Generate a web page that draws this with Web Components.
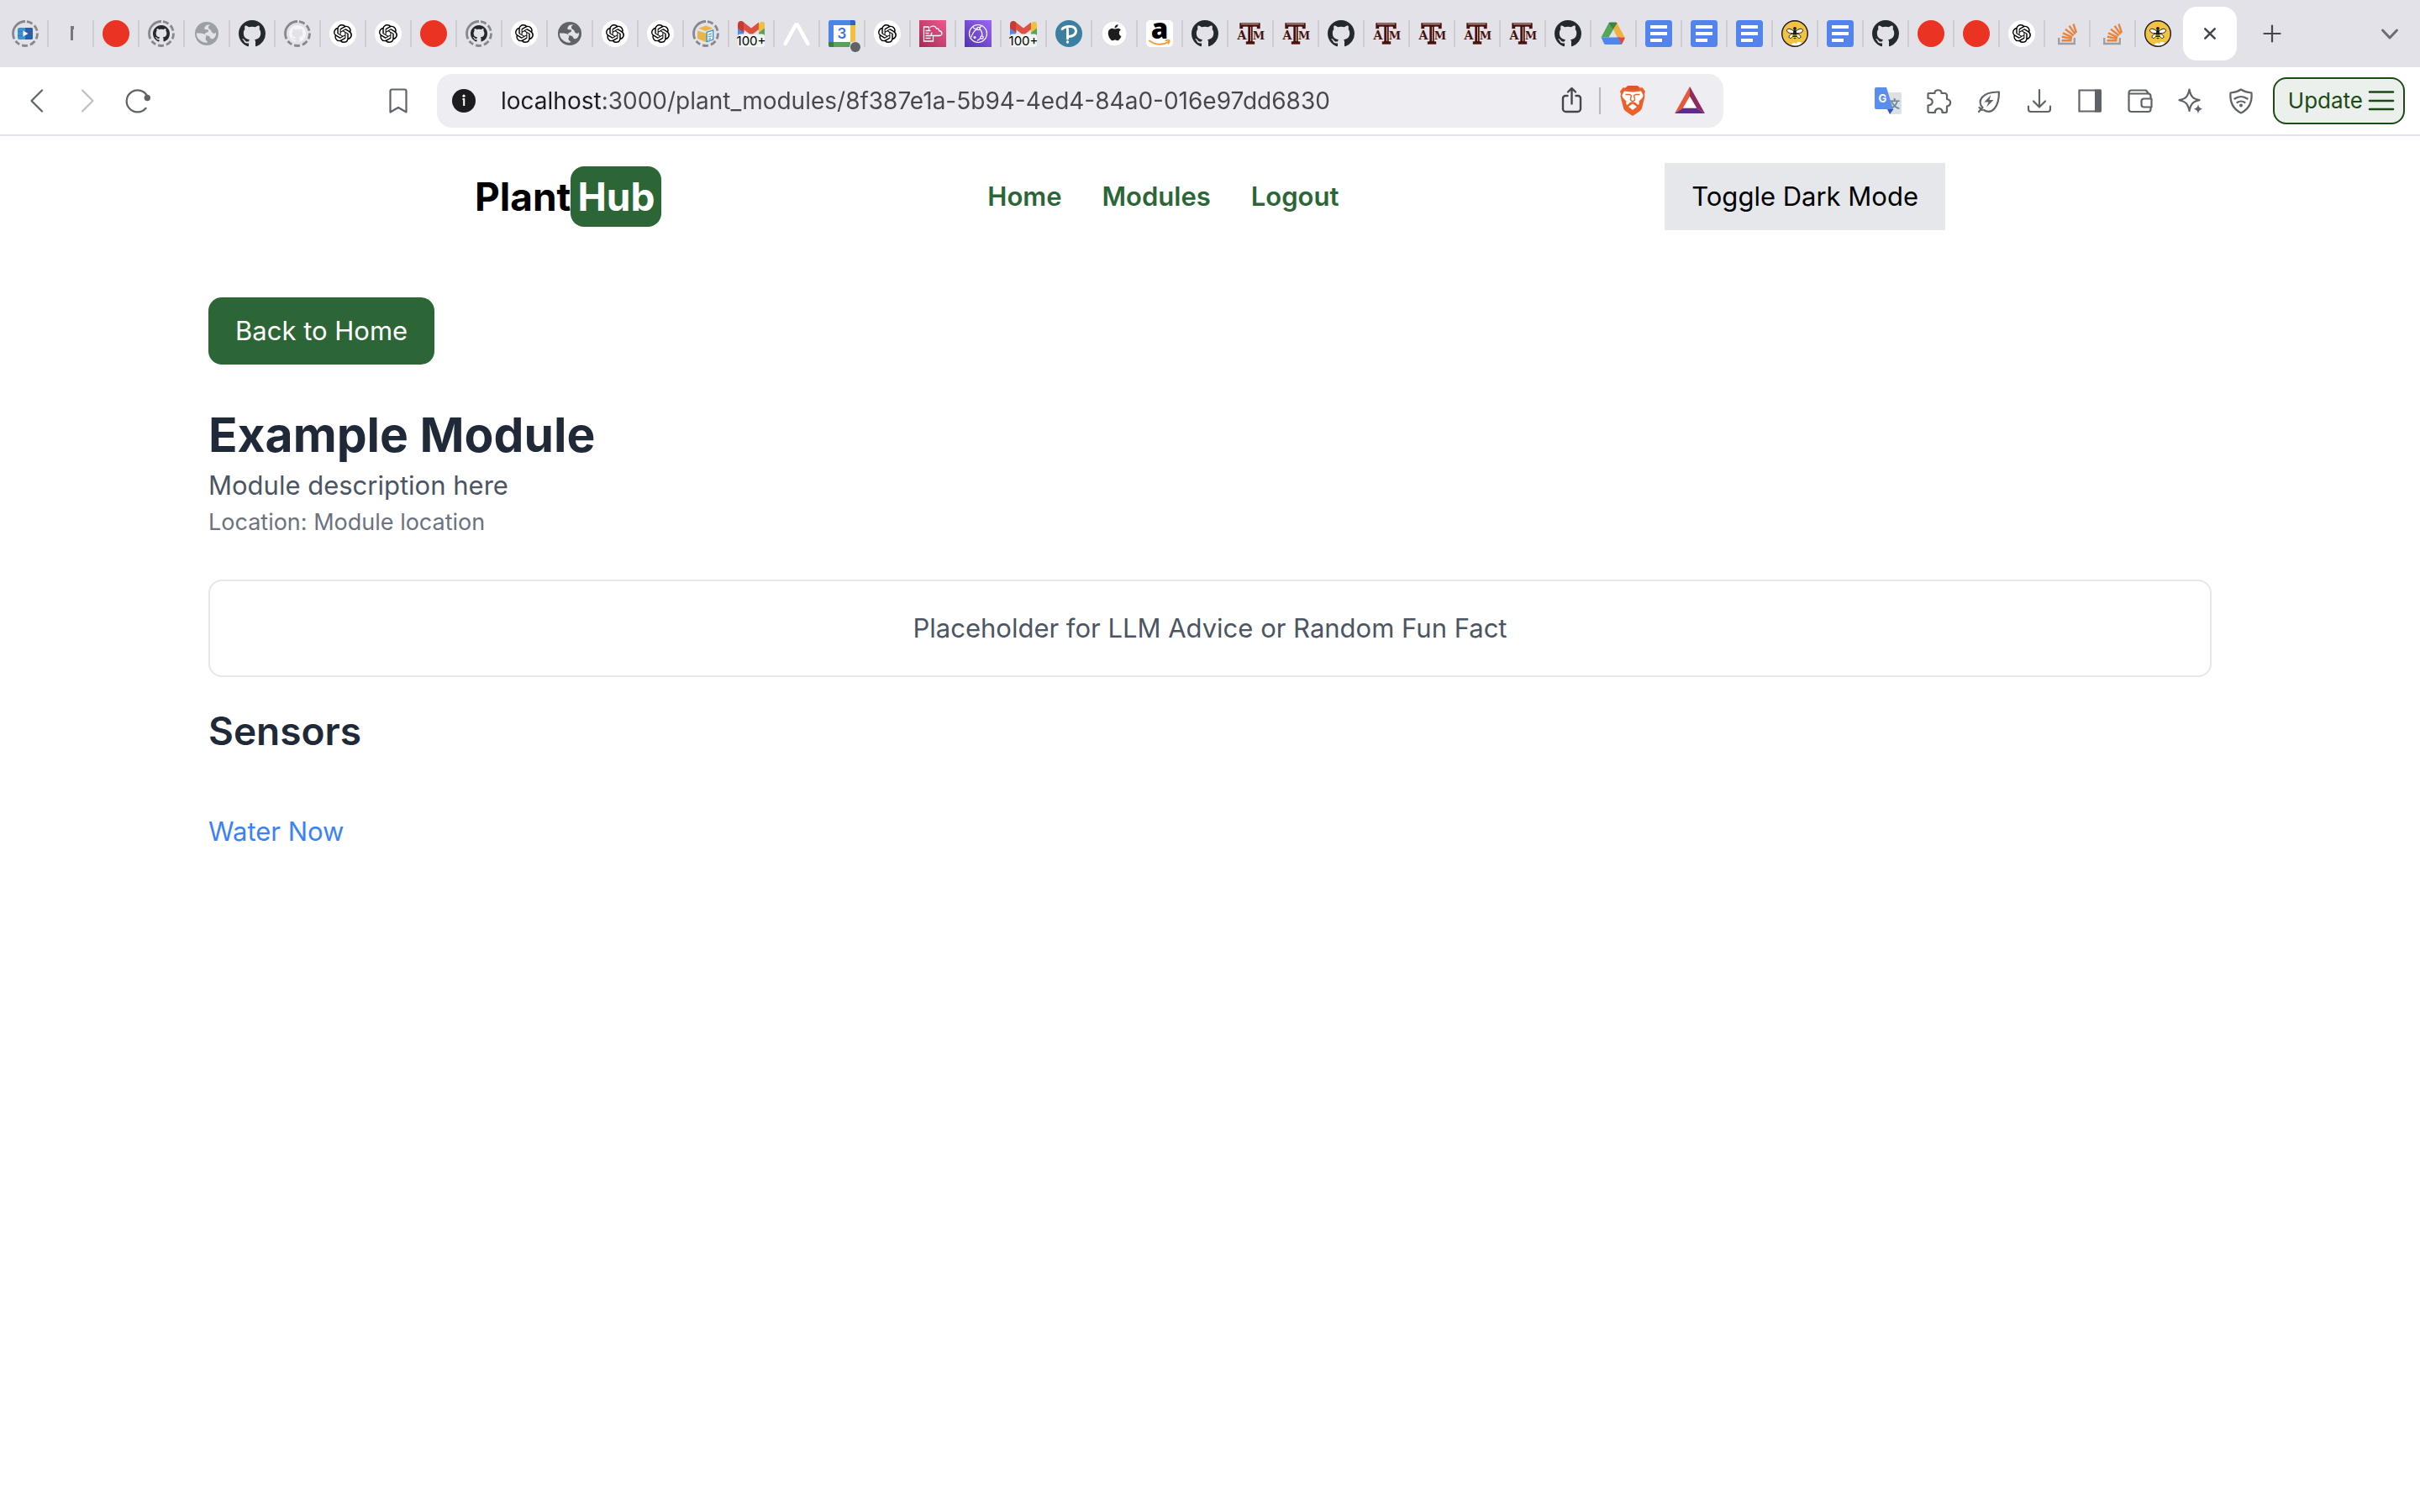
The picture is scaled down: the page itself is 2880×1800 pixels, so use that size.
<!DOCTYPE html>
<html lang="en">
<head>
<meta charset="utf-8">
<title>PlantHub</title>
<style>
  html, body { margin: 0; min-height: 100%; background: #fff; }
  body { font-family: Inter, "Liberation Sans", sans-serif; color: #000; }
</style>
</head>
<body>
<browser-window>
  <tab-strip slot="tabs"></tab-strip>
  <tool-bar slot="toolbar" url="localhost:3000/plant_modules/8f387e1a-5b94-4ed4-84a0-016e97dd6830"></tool-bar>
  <site-header></site-header>
  <module-page name="Example Module" description="Module description here" location="Module location">
    <info-card>Placeholder for LLM Advice or Random Fun Fact</info-card>
  </module-page>
</browser-window>

<script>
const OCTOCAT = 'M8 0C3.58 0 0 3.58 0 8c0 3.54 2.29 6.53 5.47 7.59.4.07.55-.17.55-.38 0-.19-.01-.82-.01-1.49-2.01.37-2.53-.49-2.69-.94-.09-.23-.48-.94-.82-1.13-.28-.15-.68-.52-.01-.53.63-.01 1.08.58 1.23.82.72 1.21 1.87.87 2.33.66.07-.52.28-.87.51-1.07-1.78-.2-3.64-.89-3.64-3.95 0-.87.31-1.59.82-2.15-.08-.2-.36-1.02.08-2.12 0 0 .67-.21 2.2.82.64-.18 1.32-.27 2-.27.68 0 1.36.09 2 .27 1.53-1.04 2.2-.82 2.2-.82.44 1.1.16 1.92.08 2.12.51.56.82 1.27.82 2.15 0 3.07-1.87 3.75-3.65 3.95.29.25.54.73.54 1.48 0 1.07-.01 1.93-.01 2.2 0 .21.15.46.55.38A8.013 8.013 0 0016 8c0-4.42-3.58-8-8-8z';
const KNOT = 'M22.2819 9.8211a5.9847 5.9847 0 0 0-.5157-4.9108 6.0462 6.0462 0 0 0-6.5098-2.9A6.0651 6.0651 0 0 0 4.9807 4.1818a5.9847 5.9847 0 0 0-3.9977 2.9 6.0462 6.0462 0 0 0 .7427 7.0966 5.98 5.98 0 0 0 .511 4.9107 6.051 6.051 0 0 0 6.5146 2.9001A5.9847 5.9847 0 0 0 13.2599 24a6.0557 6.0557 0 0 0 5.7718-4.2058 5.9894 5.9894 0 0 0 3.9977-2.9001 6.0557 6.0557 0 0 0-.7475-7.0729zm-9.022 12.6081a4.4755 4.4755 0 0 1-2.8764-1.0408l.1419-.0804 4.7783-2.7582a.7948.7948 0 0 0 .3927-.6813v-6.7369l2.02 1.1686a.071.071 0 0 1 .038.052v5.5826a4.504 4.504 0 0 1-4.4945 4.4944zm-9.6607-4.1254a4.4708 4.4708 0 0 1-.5346-3.0137l.142.0852 4.783 2.7582a.7712.7712 0 0 0 .7806 0l5.8428-3.3685v2.3324a.0804.0804 0 0 1-.0332.0615L9.74 19.9502a4.4992 4.4992 0 0 1-6.1408-1.6464zM2.3408 7.8956a4.485 4.485 0 0 1 2.3655-1.9728V11.6a.7664.7664 0 0 0 .3879.6765l5.8144 3.3543-2.0201 1.1685a.0757.0757 0 0 1-.071 0l-4.8303-2.7865A4.504 4.504 0 0 1 2.3408 7.872zm16.5963 3.8558L13.1038 8.364 15.1192 7.2a.0757.0757 0 0 1 .071 0l4.8303 2.7913a4.4944 4.4944 0 0 1-.6765 8.1042v-5.6772a.79.79 0 0 0-.407-.667zm2.0107-3.0231l-.142-.0852-4.7735-2.7818a.7759.7759 0 0 0-.7854 0L9.409 9.2297V6.8974a.0662.0662 0 0 1 .0284-.0615l4.8303-2.7866a4.4992 4.4992 0 0 1 6.6802 4.66zM8.3065 12.863l-2.02-1.1638a.0804.0804 0 0 1-.038-.0567V6.0742a4.4992 4.4992 0 0 1 7.3757-3.4537l-.142.0805L8.704 5.459a.7948.7948 0 0 0-.3927.6813zm1.0976-2.3654l2.602-1.4998 2.6069 1.4998v2.9994l-2.5974 1.4997-2.6067-1.4997Z';
const APPLE = 'M12.152 6.896c-.948 0-2.415-1.078-3.96-1.04-2.04.027-3.91 1.183-4.961 3.014-2.117 3.675-.546 9.103 1.519 12.09 1.013 1.454 2.208 3.09 3.792 3.039 1.52-.065 2.09-.987 3.935-.987 1.831 0 2.35.987 3.96.948 1.637-.026 2.676-1.48 3.676-2.948 1.156-1.688 1.636-3.325 1.662-3.415-.039-.013-3.182-1.221-3.22-4.857-.026-3.04 2.48-4.494 2.597-4.559-1.429-2.09-3.623-2.324-4.39-2.376-2-.156-3.675 1.09-4.61 1.09zM15.53 3.83c.843-1.012 1.4-2.427 1.245-3.83-1.207.052-2.662.805-3.532 1.818-.78.896-1.454 2.338-1.273 3.714 1.338.104 2.715-.688 3.559-1.701';

/* Sleeping tabs: solid arc on the left, dashes on the right. */
const RING = '<circle cx="16" cy="16" r="14.5" fill="none" stroke="#87888d" stroke-width="2.8" pathLength="360" stroke-dasharray="0 8 28 12 28 12 28 12 28 12 28 12 24 12 116 0" transform="rotate(-90 16 16)"/>';
const globe = c => `<circle cx="16" cy="16" r="14" fill="${c}"/><path fill="#e3e2e8" d="M15.500 6c-2 2-3 4-1.500 5 1 .8 3-.5 3.800.8.700 1.400-.300 2.600-2 3-1.500.4-2.300 1.700-1.500 3 .8 1 3 .3 4.500 1.200 1.800 1 1.200 3.500 4 3.300 2-.2 3-2 4.100-4.300C28 12 24 6.500 20 5zM4 15.500c4-.3 9 0 10.500 1.800 1.800 2.400-.5 4 .2 6 .4 1.300 2.300 1.300 2.300 3.200-5 1-10-2.500-12-6-.8-1.600-1-3.400-1-5z"/><path fill="${c}" d="M20 5c4.500 1.500 7 5 7.500 9-1.500 2-2.500 2-4 1.500-2-.7-1.500-3-3-4-1.200-.9-2.500-1-2.500-3 0-1.500 1-2 2-3.500z"/>`;

const FAVICONS = {
  slides: RING + '<rect x="7" y="9" width="18" height="14" rx="2" fill="#3a93cf"/><path fill="#2a5ea6" d="M16 9h7a2 2 0 012 2v10a2 2 0 01-2 2h-7z"/><path stroke="#2f7cb8" d="M7 13.500h9M7 18.500h9"/><path fill="#fff" d="M13.500 12.500v7L19.500 16z"/>',
  bar: '<path fill="#77787d" d="M16 7h4v4h-1v13h-3z"/>',
  red: '<circle cx="16" cy="16" r="16" fill="#ea3323"/>',
  github: `<path fill="#24292e" transform="scale(2)" d="${OCTOCAT}"/>`,
  githubRing: RING + `<path fill="#24292e" transform="translate(6 6) scale(1.25)" d="${OCTOCAT}"/>`,
  githubPale: RING + `<path fill="#f6f6f8" transform="translate(6 6) scale(1.25)" d="${OCTOCAT}"/>`,
  globe: globe('#9aa0a3'),
  globeDark: globe('#5f6367'),
  ai: `<circle cx="16" cy="16" r="16" fill="#fff"/><path transform="translate(5 5) scale(.917)" d="${KNOT}"/>`,
  box: RING + '<path fill="#e9b54a" d="M6 12.500l10 3v10.500l-10-4z"/><path fill="#e2a93c" d="M16 15.500l9-3v9l-9 4.500z"/><path fill="#e9b54a" d="M7.500 9.800L16 6.500l8.500 3.300L16 13z"/><path fill="#f3f8fb" stroke="#3f93cd" stroke-width="1.300" d="M17.200 14.300l7.500-2.300v11l-7.500 2.700z"/><path stroke="#3f93cd" stroke-width="1.200" d="M19 17.200l4-1.200M19 20l4-1.200M19 22.800l3-.9"/>',
  gmail: '<clipPath id="g"><rect width="32" height="32" rx="3"/></clipPath><g clip-path="url(#g)"><path fill="#4f87ec" d="M0 8l7 5v13H0z"/><path fill="#55a45a" d="M32 8l-7 5v13h7z"/><path fill="#efbf3f" d="M25 4.500C27 1 32 .5 32 5v4.500L25 15z"/><path fill="#c63c31" d="M0 5C0 .5 5 0 7.500 3v12L0 9.500z"/><path fill="#dc5142" d="M7 2.500l9 7 9-7V11l-9 7-9-7z"/><rect y="16.500" width="32" height="15.500" rx="3" fill="#f1f6f3"/></g><text x="16" y="30" text-anchor="middle" font-family="Inter" font-size="15" fill="#000">100+</text>',
  caret: '<path fill="none" stroke="#fff" stroke-width="4.500" stroke-linecap="round" stroke-linejoin="round" d="M2.500 28L15 5.500h2L29.500 28"/>',
  calendar: '<rect width="32" height="32" rx="2.500" fill="#4f83ea"/><path fill="#2f62c8" d="M26 0h3.500A2.500 2.500 0 0132 2.500V6h-6z"/><path fill="#f1bf42" d="M26 6h6v20h-6z"/><path fill="#56a45b" d="M6 26h20v6H6z"/><path fill="#397e42" d="M0 26h6v6H2.500A2.500 2.500 0 010 29.500z"/><path fill="#fff" d="M6 6h20v20H6z"/><path fill="#e3e2e8" d="M26 26h6v6h-6z"/><text x="16" y="22" text-anchor="middle" font-family="Inter" font-weight="600" font-size="17" fill="#3b72df">3</text><circle cx="32" cy="32" r="7" fill="#e3e2e8"/><circle cx="32" cy="32" r="6" fill="#5f6368"/>',
  pink: '<linearGradient id="p" x1="0" y1="1" x2="1" y2="0"><stop stop-color="#a62a55"/><stop offset="1" stop-color="#ee5a8d"/></linearGradient><path fill="url(#p)" d="M0 0h32v32H0z"/><g fill="none" stroke="#fff" stroke-width="1.300"><path d="M11.500 8H5.500v17h11v-7M11.500 8v5M7.500 12.500h6M7.500 15.500h4M7.500 18.500h7M7.500 21.500h6M13 8.500c2-2.500 6.500-1.500 7.500 1.500 2-.5 3 .8 3 2.500 4.500.5 4.500 6 .5 6h-7.500c-3 0-3-3-1-3.500"/></g>',
  purple: '<linearGradient id="v" x1="0" y1="1" x2="1" y2="0"><stop stop-color="#5132ae"/><stop offset="1" stop-color="#9c68f6"/></linearGradient><path fill="url(#v)" d="M0 0h32v32H0z"/><g fill="none" stroke="#fff" stroke-width="1.200"><circle cx="16" cy="16" r="10.500"/><circle cx="16.500" cy="10" r="1.700"/><circle cx="20.500" cy="20.500" r="1.700"/><circle cx="12" cy="20.500" r="1"/><path d="M15 10.500c-3.500 2-6 5.500-7 10M18 10.500c2 2 3 5 2.800 8.200M19 21.500l-4 3M10 8.500c1 2 3 2 5 1.500M20 7l-2 2"/></g>',
  pearson: '<circle cx="16" cy="16" r="16" fill="#3c7fa1"/><path fill="none" stroke="#fff" stroke-width="3" stroke-linecap="round" d="M8 10.500C12 6.500 24.500 5.500 24.500 13c0 4-4 6.500-8.500 6.500M14.500 10.500v11.500"/><circle cx="14.500" cy="26" r="1.700" fill="#fff"/>',
  apple: `<circle cx="16" cy="16" r="15" fill="#fff" stroke="#d0d0d4" stroke-width=".6"/><path fill="#1d1d1f" transform="translate(7 5) scale(.8)" d="${APPLE}"/>`,
  amazon: '<rect width="32" height="32" rx="5" fill="#fff"/><text x="16" y="22" text-anchor="middle" font-family="Open Sans" font-weight="800" font-size="33" fill="#000">a</text><path fill="none" stroke="#f19e38" stroke-width="2" stroke-linecap="round" d="M4 24.500c7 5.500 16 5.500 22 1.500M23.500 24.200c2-.7 3.500-.7 4 0 .4.800-.2 2.300-1 3.500"/>',
  atm: '<g fill="#4a120d" font-family="DejaVu Serif" font-weight="700" text-anchor="middle"><text x="6" y="22.500" font-size="14">A</text><text x="26" y="22.500" font-size="13">M</text></g><path fill="#4a120d" stroke="#efe9ea" stroke-width=".6" d="M3 3h25v7.500h-4.500V8H19v17h2.500v4h-11v-4H13V8H7.500v2.500H3z"/><path stroke="#e8dcdc" stroke-width=".8" d="M16.500 8v17M5 4.800h21"/>',
  drive: '<path fill="#57a55c" d="M10.500 3.500L1.500 20.500h9.200L20.500 3.500z"/><path fill="#f1b13c" d="M20.500 3.500l9 17h-9L15.500 10z"/><path fill="#3c8345" d="M10.500 3.500q.5-1 2-1h6q1.500 0 2 1L15.700 11z"/><path fill="#e3e2e8" d="M15.700 12l-5 8.500h10z"/><path fill="#4e86ec" d="M1.500 20.500h22.500v8.500H7q-1.500 0-2-1z"/><path fill="#df4a3a" d="M21 20.500h8.500q.5.500 0 1.500l-3 6q-.5 1-1.500 1z"/><path fill="#4e86ec" d="M20 20.500h1.500l4.500 8.500H20z"/>',
  docs: '<rect width="32" height="32" rx="3.500" fill="#5383ec"/><path fill="#fff" d="M6 6h20v4H6zM6 14h20v4H6zM6 22h14v4H6z"/>',
  bee: '<circle cx="16" cy="16" r="15.300" fill="#f1c244" stroke="#1b1b1b" stroke-width="1.400"/><path fill="#fff" d="M12 29.500c1-3 4-3 5.500-1.500 1.500-3 5-3 7-.5-3.500 3-9 3.500-12.500 2z"/><g fill="#fff" stroke="#1b1b1b" stroke-width="1"><path d="M15 13.500C11 9 6 10 6.500 12.500s4 3.500 8.500 3zM17 13.500c4-4.500 9-3.500 8.500-1s-4 3.500-8.500 3zM14.500 16c-4 .5-6.500 3.500-5 5s4-1 5.500-3zM17.500 16c4 .5 6.500 3.500 5 5s-4-1-5.500-3z"/></g><circle cx="16" cy="9.800" r="1.900" fill="#1b1b1b"/><path fill="#1b1b1b" d="M14.500 11.500h3l.5 5c1.500 2.500.5 4.500-2 6-2.500-1.500-3.500-3.500-2-6z"/><path stroke="#f1c244" d="M13 18h6M13 20.500h6"/>',
  stack: '<path fill="none" stroke="#9b9ea4" stroke-width="2.300" d="M6.200 21v7h18.600v-7"/><g fill="none" stroke="#e8853d" stroke-width="2.400"><path d="M9.500 24.200h12M9.800 19.800l12 2.300M11 15.400l11.200 5M14 10.800l9.800 7.400M18.500 6.800l7.200 9.800M23.500 4.500l3.500 10.500"/></g>'
};

const STROKE = 'fill="none" stroke="currentColor" stroke-width="2.200" stroke-linecap="round" stroke-linejoin="round"';
const GLYPHS = {
  close: `<path fill="none" stroke="#44474b" stroke-width="3" stroke-linecap="round" d="M9.500 9.500l13 13M22.500 9.500l-13 13"/>`,
  plus: `<path fill="none" stroke="#44474b" stroke-width="2.200" stroke-linecap="round" d="M6.500 16h19M16 6.500v19"/>`,
  down: `<path fill="none" stroke="#6b6d72" stroke-width="3" stroke-linecap="round" stroke-linejoin="round" d="M7.500 12l8.500 9 8.500-9"/>`,
  back: `<path ${STROKE} d="M22 3.500L9.500 16 22 28.500"/>`,
  forward: `<path ${STROKE} d="M10 3.500L22.500 16 10 28.500"/>`,
  reload: `<path ${STROKE} d="M25.600 24.800A13 13 0 1127.500 11"/><circle cx="27.300" cy="12.500" r="3.700" fill="currentColor"/>`,
  bookmark: `<path ${STROKE} d="M8.500 2.500h15a2 2 0 012 2V29.500L16 24l-9.500 5.500V4.500a2 2 0 012-2z"/>`,
  info: '<circle cx="16" cy="16" r="14" fill="#1c1b1f"/><circle cx="16" cy="10.200" r="1.600" fill="#fff"/><path fill="none" stroke="#fff" stroke-width="2" d="M14.500 14h1.700v8"/>',
  share: '<g fill="none" stroke="#45454a" stroke-width="2.400" stroke-linecap="round" stroke-linejoin="round"><path d="M10.500 10H8a3 3 0 00-3 3v12.500A3.500 3.500 0 008.500 29h14a3.500 3.500 0 003.500-3.500V13a3 3 0 00-3-3h-2.500M15.500 19.500V1.500M11 5.500l4.500-4.500L20 5.500"/></g>',
  puzzle: `<path ${STROKE} d="M4 7h7.500c-.8-5 8.800-5 8 0h4a2.500 2.500 0 012.500 2.500V14c5.500 1 5.500 7.500 0 8.500V28a2 2 0 01-2 2h-3.500c.8-6.500-9.300-6.500-8.500 0H5.500a2 2 0 01-2-2v-6.500c7-.5 7-8 0-8.500V8.500A1.500 1.500 0 014 7z"/>`,
  leaf: `<path ${STROKE} d="M4 29l4.500-5C1.500 17 7 5 28 5.500c0 18-8.500 27.500-18 21.500M4.500 24L8 27"/><path fill="currentColor" d="M18.500 9l-8 8.500h5l-2.500 6 8.500-8.500h-5z"/>`,
  download: `<path ${STROKE} d="M16 3v20M9 16.500l7 7 7-7M3 22.500v3.500a3 3 0 003 3h20a3 3 0 003-3v-3.500"/>`,
  panel: '<path fill="none" stroke="currentColor" stroke-width="2.200" d="M3.500 3.500h25v25h-25z"/><path fill="currentColor" d="M22 2.500h6a2 2 0 012 2v23a2 2 0 01-2 2h-6z"/>',
  wallet: `<path ${STROKE} d="M2.500 6.500V26a3 3 0 003 3h20a3 3 0 003-3v-2M2.500 6.500a3 3 0 013-3h17.500l3 4M2.500 7.500h23a3 3 0 013 3v3M29.500 13.500h-9a3 3 0 00-3 3v4a3 3 0 003 3h9z"/>`,
  sparkle: `<path ${STROKE} d="M14.500 2.500c1.500 8 4 11 12 12.700-8 1.700-10.500 4.800-12 12.800C13 20 10.500 17 2.500 15.200 10.500 13.500 13 10.500 14.500 2.500z"/><path fill="currentColor" d="M25 20c.8 3.800 2 5 5.500 5.800-3.500.8-4.700 2-5.500 5.700-.8-3.700-2-4.900-5.500-5.700C23 25 24.200 23.800 25 20z"/>`,
  shield: `<path ${STROKE} d="M16 2.500c3.500 2.500 7.500 3.500 12.500 4C29.500 18 26 25.500 16 30.500 6 25.500 2.500 18 3.500 6.500c5-.5 9-1.500 12.500-4z"/><path fill="none" stroke="currentColor" stroke-width="2.200" stroke-linecap="round" d="M8.500 13.500c4.500-3.300 10.500-3.300 15 0M11.500 18c3-2 6-2 9 0"/><circle cx="16" cy="21.500" r="2" fill="currentColor"/>`,
  menu: '<path stroke="#1b4a14" stroke-width="2.600" stroke-linecap="round" d="M2 5.500h28M2 16h28M2 26h28"/>',
  translate: '<path fill="#dfe0e2" d="M13 6h17a2 2 0 012 2v22a2 2 0 01-2 2H18z"/><text x="23.500" y="24" text-anchor="middle" font-family="Noto Sans CJK SC" font-size="13" font-weight="700" fill="#6c8794">文</text><path fill="#3b52b6" d="M15 26h7.500L18 32z"/><path fill="#5b8def" d="M2 0h12l8 26H2a2 2 0 01-2-2V2a2 2 0 012-2z"/><text x="9.500" y="18" text-anchor="middle" font-family="Inter" font-size="13" font-weight="700" fill="#fff">G</text>',
  brave: '<path fill="#eb612c" d="M12.500 0h11l3 2.500 3-.3 3.500 4.500-1 3 .5 3-3.500 14c-1 3-3 4-11 9.300-8-5.300-10-6.300-11-9.300L3.500 12.700l.5-3-1-3L6.500 2.200l3 .3z"/><path fill="#dc5729" d="M12.500 0h11l3 2.500-2 2h-13l-2-2z"/><path fill="#fff" d="M8 6.500l4.500.5 5.500.5 5.500-.5 4.500-.5 2.500 4.500c0 2-.5 3-1.500 4l-3.500 3.500c.5 2 .5 3.500-1 4.500l-4-3.500h-5l-4 3.500c-1.500-1-1.500-2.500-1-4.500L7 15c-1-1-1.500-2-1.500-4zM18 21.500l5 3.500-5 4-5-4z"/><path fill="none" stroke="#eb612c" stroke-width="1.400" stroke-linejoin="round" d="M9.500 10.500l5 0 2 1.500-1 3.500 0 1.500 2.500 2 2.500-2 0-1.500-1-3.500 2-1.500 5 0"/>',
  bat: '<path fill="#e8573a" d="M18 1L0 33l10-6.500L18 13z"/><path fill="#8d2a5e" d="M18 1l18 32-10-6.500L18 13z"/><path fill="#5d2d8c" d="M0 33h36l-10-6.500H10z"/><path fill="#fff" d="M18 13l-8 13.500h16z"/>'
};

/* Builds the element's shadow root from a style sheet and markup. */
class Base extends HTMLElement {
  draw(css, html) {
    const t = document.createElement('template');
    t.innerHTML = `<style>:host,*{box-sizing:border-box}button,input{font:inherit;color:inherit;border:0;margin:0;padding:0;background:none}${css}</style>${html}`;
    (this.shadowRoot || this.attachShadow({ mode: 'open' })).replaceChildren(t.content.cloneNode(true));
  }
}

customElements.define('ui-icon', class extends Base {
  connectedCallback() {
    const size = this.getAttribute('size') || 32;
    const name = this.getAttribute('name');
    const box = name === 'brave' || name === 'bat' ? 36 : 32;
    this.draw(`:host{display:block;width:${size}px;height:${size}px;flex:none}svg{display:block;width:100%;height:100%;overflow:visible}`,
      `<svg viewBox="0 0 ${box} ${box}" aria-hidden="true">${GLYPHS[name] || FAVICONS[name]}</svg>`);
  }
});

customElements.define('icon-button', class extends Base {
  connectedCallback() {
    const off = this.hasAttribute('disabled') ? 'disabled' : '';
    this.draw(`:host{display:block;flex:none;color:#5f6368}:host([disabled]){color:#bfc0c3}button{display:block}`,
      `<button type="button" aria-label="${this.getAttribute('label')}" ${off}><ui-icon name="${this.getAttribute('icon')}" size="${this.getAttribute('size') || 32}"></ui-icon></button>`);
  }
});

customElements.define('browser-window', class extends Base {
  connectedCallback() {
    this.draw(`:host{display:flex;flex-direction:column;min-height:100vh}main{flex:1}`,
      `<slot name="tabs"></slot><slot name="toolbar"></slot><main><slot></slot></main>`);
  }
});

customElements.define('tab-strip', class extends Base {
  connectedCallback() {
    const tabs = 'slides bar red githubRing globe github githubPale ai ai red githubRing ai globeDark ai ai box gmail caret calendar ai pink purple gmail pearson apple amazon github atm atm github atm atm atm atm github drive docs docs docs bee docs github red red ai stack stack bee'.split(' ');
    this.draw(`
      :host{display:flex;align-items:center;height:80px;padding:0 20px 0 4px;background:#e3e2e8}
      nav{display:flex;align-items:center}
      nav icon-button{padding:0 10px}
      nav icon-button + icon-button{border-left:2px solid #cdccd1}
      .active{display:flex;align-items:center;justify-content:center;width:64px;height:64px;margin-left:4px;border-radius:16px;background:#fff}
      .new{margin-left:26px}
      .list{margin-left:auto}`,
      `<nav aria-label="Tabs">${tabs.map(t => `<icon-button icon="${t}" label="${t} tab"></icon-button>`).join('')}</nav>
       <div class="active"><icon-button icon="close" label="Close tab" size="28"></icon-button></div>
       <icon-button class="new" icon="plus" label="New tab"></icon-button>
       <icon-button class="list" icon="down" label="Search tabs"></icon-button>`);
  }
});

customElements.define('address-bar', class extends Base {
  connectedCallback() {
    /* The host part of the address is darker than the path. */
    this.draw(`
      :host{display:flex;align-items:center;flex:1;height:64px;padding:0 22px 0 16px;border-radius:18px;background:#eeedf2}
      input{flex:1;min-width:0;margin:0 28px;font-size:28px;line-height:40px;color:#47464b;outline:0;
        background:linear-gradient(90deg,#1c1b1f 119px,#47464b 119px);-webkit-background-clip:text;background-clip:text;-webkit-text-fill-color:transparent}
      hr{width:2px;height:32px;margin:0 20px 0 16px;border:0;background:#b9b8bd}
      .bat{margin-left:32px}`,
      `<icon-button icon="info" label="Site information"></icon-button>
       <input type="text" aria-label="Address" value="${this.getAttribute('url')}">
       <icon-button icon="share" label="Share"></icon-button><hr>
       <icon-button icon="brave" label="Brave Shields" size="36"></icon-button>
       <icon-button class="bat" icon="bat" label="Brave Rewards" size="36"></icon-button>`);
  }
});

customElements.define('tool-bar', class extends Base {
  connectedCallback() {
    const tools = ['translate', 'puzzle', 'leaf', 'download', 'panel', 'wallet', 'sparkle', 'shield'];
    this.draw(`
      :host{display:flex;align-items:center;height:82px;padding:0 18px 0 28px;border-bottom:2px solid #e3e2e8;background:#fff}
      .group{display:flex;align-items:center;gap:28px}
      .center{flex:1;display:flex;align-items:center;gap:30px;margin:0 180px 0 278px}
      .update{display:flex;align-items:center;gap:6px;height:56px;margin-left:22px;padding:0 10px 0 16px;border:2px solid #1b4a14;border-radius:16px;background:#ebf0ec;color:#1b4a14;font-size:26px;line-height:40px}`,
      `<div class="group">
         <icon-button icon="back" label="Back"></icon-button>
         <icon-button icon="forward" label="Forward" disabled></icon-button>
         <icon-button icon="reload" label="Reload"></icon-button>
       </div>
       <div class="center"><icon-button icon="bookmark" label="Bookmark"></icon-button><address-bar url="${this.getAttribute('url')}"></address-bar></div>
       <div class="group">${tools.map(t => `<icon-button icon="${t}" label="${t}"></icon-button>`).join('')}</div>
       <button class="update" type="button">Update<ui-icon name="menu"></ui-icon></button>`);
  }
});

customElements.define('site-header', class extends Base {
  connectedCallback() {
    this.draw(`
      :host{display:block;padding:32px;font-size:31px;line-height:48px}
      header{display:flex;align-items:center;justify-content:space-between;max-width:1750px;margin:0 auto}
      .brand{display:flex;align-items:center;font-size:46px;font-weight:700;line-height:56px;color:#000;text-decoration:none}
      .brand span{padding:8px;border-radius:16px;background:#2c6636;color:#fff}
      nav{display:flex;gap:48px}
      nav a{color:#2c6636;font-weight:600;text-decoration:none}
      .toggle{padding:16px 32px;background:#e5e7eb}`,
      `<header>
         <a class="brand" href="#home">Plant<span>Hub</span></a>
         <nav><a href="#home">Home</a><a href="#modules">Modules</a><a href="#logout">Logout</a></nav>
         <button class="toggle" type="button">Toggle Dark Mode</button>
       </header>`);
  }
});

customElements.define('info-card', class extends Base {
  connectedCallback() {
    this.draw(`:host{display:block;padding:32px;border:2px solid #e5e7eb;border-radius:16px;color:#4b5563;text-align:center}`, `<slot></slot>`);
  }
});

customElements.define('module-page', class extends Base {
  connectedCallback() {
    const a = n => this.getAttribute(n);
    this.draw(`
      :host{display:block;max-width:2560px;margin:0 auto;padding:48px 88px;font-size:31px;line-height:48px}
      h1,h2,p{margin:0;color:#1f2937}
      .back{display:inline-block;padding:16px 32px;border-radius:16px;background:#2c6636;color:#fff;text-decoration:none;vertical-align:top}
      h1{margin-top:48px;font-size:57px;line-height:72px;font-weight:700}
      .description{color:#4b5563}
      .location{margin-bottom:48px;font-size:27px;line-height:40px;color:#6b7280}
      h2{margin:32px 0 64px;font-size:46px;line-height:64px;font-weight:600}
      .water{display:block;color:#3b82f6}`,
      `<a class="back" href="#home">Back to Home</a>
       <h1>${a('name')}</h1>
       <p class="description">${a('description')}</p>
       <p class="location">Location: ${a('location')}</p>
       <slot></slot>
       <h2>Sensors</h2>
       <button class="water" type="button">Water Now</button>`);
  }
});
</script>
</body>
</html>
